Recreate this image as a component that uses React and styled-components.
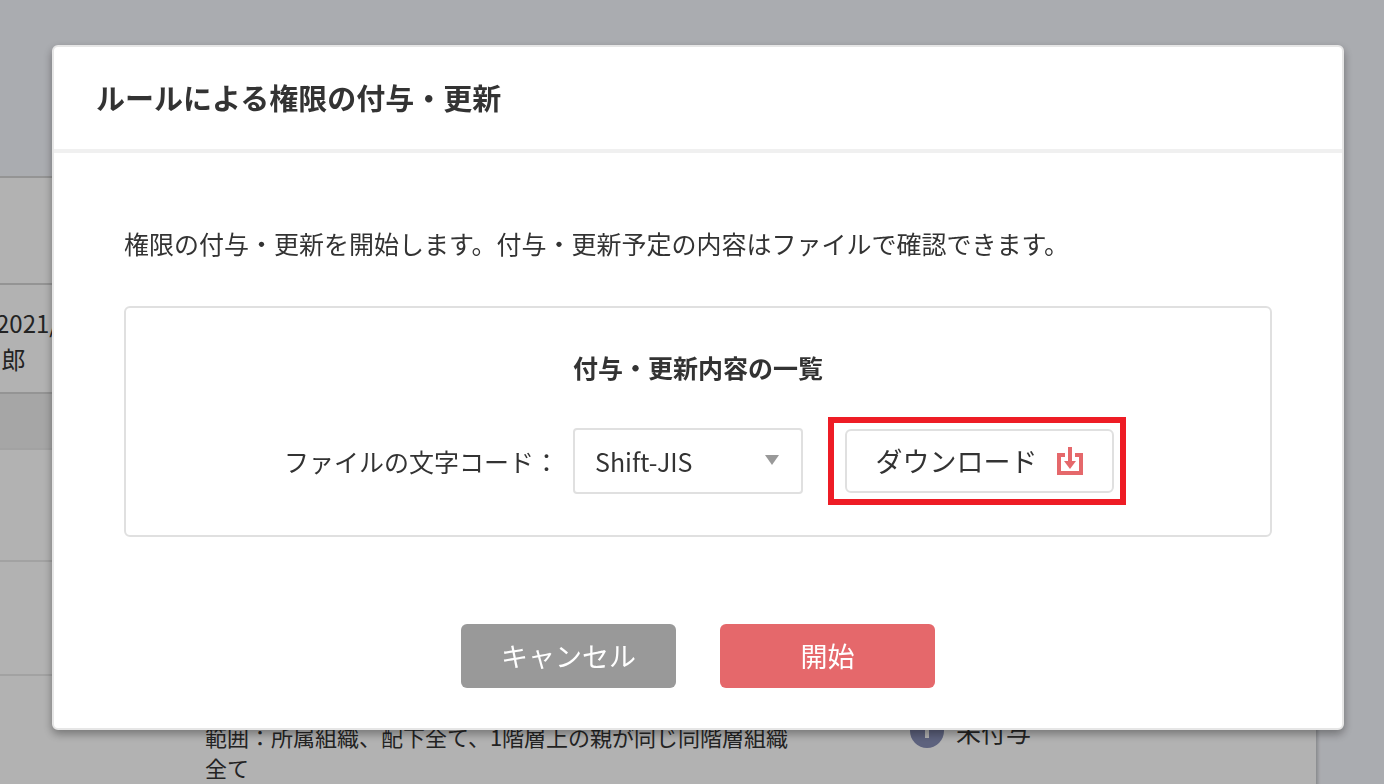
import styled, { createGlobalStyle, css } from "styled-components";

const GlobalStyle = createGlobalStyle`
  *, *::before, *::after {
    box-sizing: border-box;
  }
  html, body, #root {
    height: 100%;
  }
  body {
    margin: 0;
    overflow: hidden;
    background-color: #f4f6fc;
    color: #333;
    font-family: "Noto Sans CJK JP", sans-serif;
    font-size: 25px;
    line-height: 36px;
  }
  button, select {
    font: inherit;
    color: inherit;
  }
`;

const Page = styled.main`
  padding: 176px 68px 0 0;
  height: 100%;
  overflow: hidden;
`;

const Table = styled.table`
  width: 100%;
  border-collapse: collapse;
  table-layout: fixed;
  background-color: #fff;
  box-shadow: 2px 3px 3px rgba(0, 0, 0, 0.2);
`;

const Row = styled.tr`
  height: ${(props) => props.$height}px;
  background-color: ${(props) => (props.$shaded ? "#eee" : "#fff")};
`;

const Cell = styled.td`
  padding: 0;
  vertical-align: top;
  border-top: 2px solid ${(props) => (props.$strong ? "#d4d4d4" : "#e8e8e8")};
`;

const DateText = styled.div`
  margin-left: -4px;
  padding-top: 20px;
  font-size: 24px;
`;

const Scope = styled.div`
  padding-top: 45px;
  font-size: 22px;
  line-height: 31px;
`;

const Status = styled.div`
  display: flex;
  align-items: center;
  gap: 12px;
  padding-top: 37px;
`;

const InfoIcon = styled.svg`
  width: 34px;
  height: 34px;
`;

const Overlay = styled.div`
  position: fixed;
  inset: 0;
  padding: 45px 40px 0 52px;
  background-color: rgba(0, 0, 0, 0.3);
`;

const Modal = styled.section`
  border: 2px solid #e6e6e6;
  border-radius: 6px;
  background-color: #fff;
  box-shadow: 0 4px 10px rgba(0, 0, 0, 0.35);
`;

const ModalHeader = styled.header`
  padding: 30px 42px 32px;
  border-bottom: 4px solid #f0f0f0;
`;

const Title = styled.h1`
  margin: 0;
  font-size: 29px;
  line-height: 40px;
  font-weight: 700;
`;

const ModalBody = styled.div`
  padding: 72px 70px 40px;
`;

const Message = styled.p`
  margin: 0;
`;

const FileBox = styled.div`
  margin-top: 45px;
  padding: 41px 0 30px;
  border: 2px solid #e0e0e0;
  border-radius: 6px;
`;

const FileTitle = styled.h2`
  margin: 0;
  font-size: 25px;
  line-height: 36px;
  font-weight: 700;
  text-align: center;
`;

const FileRow = styled.div`
  display: flex;
  align-items: center;
  justify-content: center;
  margin-top: 32px;
  padding-left: 14px;
`;

const SelectWrapper = styled.div`
  position: relative;
  margin: 0 25px 0 14px;
  svg {
    position: absolute;
    top: 27px;
    right: 24px;
    width: 14px;
    height: 10px;
    pointer-events: none;
  }
`;

const Select = styled.select`
  display: block;
  width: 230px;
  height: 66px;
  padding: 0 20px;
  border: 2px solid #e0e0e0;
  border-radius: 4px;
  background-color: #fff;
  appearance: none;
`;

const Highlight = styled.div`
  padding: 6px 6px 6px 11px;
  border: 6px solid #ee1c25;
`;

const Button = styled.button`
  display: flex;
  align-items: center;
  justify-content: center;
  height: 64px;
  border: 0;
  border-radius: 6px;
  font-size: 27px;
  cursor: pointer;
  ${(props) =>
    props.$outline &&
    css`
      gap: 18px;
      width: 269px;
      border: 2px solid #e0e0e0;
      background-color: #fff;
    `}
  ${(props) =>
    props.$color &&
    css`
      width: 215px;
      background-color: ${props.$color};
      color: #fff;
    `}
`;

const DownloadIcon = styled.svg`
  width: 28px;
  height: 32px;
`;

const Actions = styled.div`
  display: flex;
  justify-content: center;
  gap: 44px;
  margin-top: 87px;
`;

const Background = () => (
  <Page>
    <Table>
      <colgroup>
        <col style={{ width: 205 }} />
        <col style={{ width: 705 }} />
        <col />
      </colgroup>
      <tbody>
        <Row $height={107}>
          <Cell $strong colSpan={3} />
        </Row>
        <Row $height={109}>
          <Cell $strong colSpan={3}>
            <DateText>
              2021/
              <br />
              &nbsp;郎
            </DateText>
          </Cell>
        </Row>
        <Row $height={56} $shaded>
          <Cell $strong colSpan={3} />
        </Row>
        <Row $height={112}>
          <Cell colSpan={3} />
        </Row>
        <Row $height={114}>
          <Cell colSpan={3} />
        </Row>
        <Row $height={140}>
          <Cell />
          <Cell>
            <Scope>
              範囲：所属組織、配下全て、1階層上の親が同じ同階層組織
              <br />
              全て
            </Scope>
          </Cell>
          <Cell>
            <Status>
              <InfoIcon viewBox="0 0 34 34" aria-hidden="true">
                <circle cx="17" cy="17" r="17" fill="#868db5" />
                <path d="M17 8v3M17 14v10" stroke="#fff" strokeWidth="4" />
              </InfoIcon>
              未付与
            </Status>
          </Cell>
        </Row>
      </tbody>
    </Table>
  </Page>
);

const App = () => {
  return (
    <>
      <GlobalStyle />
      <Background />
      <Overlay>
        <Modal role="dialog" aria-modal="true" aria-labelledby="modal-title">
          <ModalHeader>
            <Title id="modal-title">ルールによる権限の付与・更新</Title>
          </ModalHeader>
          <ModalBody>
            <Message>
              権限の付与・更新を開始します。付与・更新予定の内容はファイルで確認できます。
            </Message>
            <FileBox>
              <FileTitle>付与・更新内容の一覧</FileTitle>
              <FileRow>
                <label htmlFor="encoding">ファイルの文字コード：</label>
                <SelectWrapper>
                  <Select id="encoding" defaultValue="sjis">
                    <option value="sjis">Shift-JIS</option>
                  </Select>
                  <svg viewBox="0 0 14 10" aria-hidden="true">
                    <path d="M0 0h14L7 10z" fill="#999" />
                  </svg>
                </SelectWrapper>
                <Highlight>
                  <Button type="button" $outline>
                    ダウンロード
                    <DownloadIcon viewBox="0 0 28 32" fill="none" aria-hidden="true">
                      <path
                        d="M9 10H3v18h22V10h-6"
                        stroke="#e5686b"
                        strokeWidth="4"
                      />
                      <path d="M14 2v17" stroke="#e5686b" strokeWidth="4" />
                      <path d="M8 16h12l-6 8z" fill="#e5686b" />
                    </DownloadIcon>
                  </Button>
                </Highlight>
              </FileRow>
            </FileBox>
            <Actions>
              <Button type="button" $color="#999">
                キャンセル
              </Button>
              <Button type="button" $color="#e5686b">
                開始
              </Button>
            </Actions>
          </ModalBody>
        </Modal>
      </Overlay>
    </>
  );
};

export default App;
